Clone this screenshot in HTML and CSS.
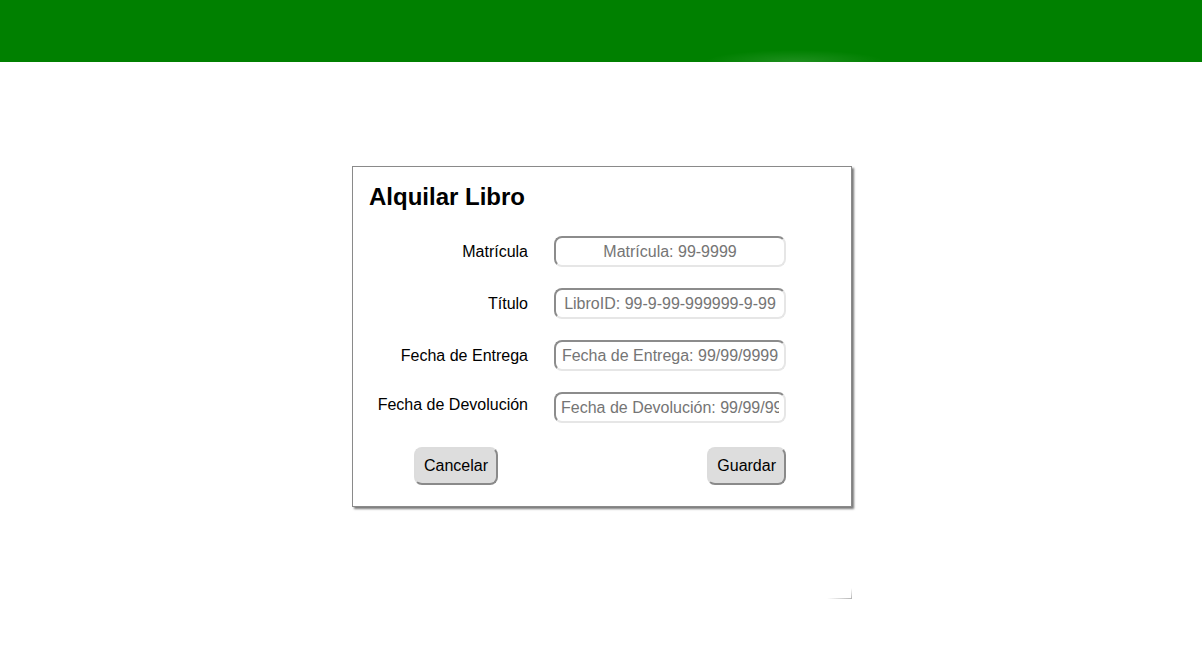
FILE: index.html
```html
<!DOCTYPE html>
<html lang="es">
<head>
<meta charset="utf-8">
<title>Alquilar Libro</title>
<link rel="stylesheet" href="styles.css">
</head>
<body>
<header class="topbar"></header>
<main class="stage">
  <form class="dialog">
    <h2 class="dialog-title">Alquilar Libro</h2>
    <div class="form-grid">
      <label class="field-label" for="mat">Matrícula</label>
      <input class="field-input" id="mat" type="text" placeholder="Matrícula: 99-9999">
      <label class="field-label" for="tit">Título</label>
      <input class="field-input" id="tit" type="text" placeholder="LibroID: 99-9-99-999999-9-99">
      <label class="field-label" for="ent">Fecha de Entrega</label>
      <input class="field-input" id="ent" type="text" placeholder="Fecha de Entrega: 99/99/9999">
      <label class="field-label field-label-high" for="dev">Fecha de Devolución</label>
      <input class="field-input" id="dev" type="text" placeholder="Fecha de Devolución: 99/99/9999">
    </div>
    <div class="actions">
      <button class="btn" type="button">Cancelar</button>
      <button class="btn" type="button">Guardar</button>
    </div>
  </form>
  <div class="corner-mark"></div>
</main>
</body>
</html>
```
FILE: styles.css
```css
html, body {
  margin: 0;
  padding: 0;
  background: #ffffff;
  font-family: "Liberation Sans", Arial, sans-serif;
  color: #000;
}

.topbar {
  height: 62px;
  background:
    radial-gradient(ellipse 90px 12px at 795px 62px, rgba(255, 255, 255, 0.12), rgba(255, 255, 255, 0) 100%),
    #008000;
}

.stage {
  position: relative;
  height: 610px;
  padding-top: 104px;
  box-sizing: border-box;
}

.dialog {
  box-sizing: border-box;
  width: 500px;
  margin-left: calc(50% - 249px);
  border: 1px solid #8a8a8a;
  box-shadow: 2px 2px 2px #7a7a7a;
  background: #fff;
  padding: 16px 16px 21px 16px;
}

.dialog-title {
  margin: 0 0 25px 0;
  font-size: 24px;
  font-weight: bold;
  line-height: 28px;
}

.form-grid {
  display: grid;
  grid-template-columns: 159px 232px;
  column-gap: 26px;
  row-gap: 21px;
  align-items: center;
}

.field-label {
  text-align: right;
  font-size: 16px;
  line-height: 18px;
}

.field-label-high {
  position: relative;
  top: -3px;
}

.field-input {
  box-sizing: border-box;
  width: 232px;
  height: 31px;
  margin: 0;
  padding: 0 5px;
  border: 2px solid;
  border-color: #8c8c8c #e6e6e6 #e6e6e6 #8c8c8c;
  border-radius: 8px;
  background: #fff;
  font-family: "Liberation Sans", Arial, sans-serif;
  font-size: 16px;
  text-align: center;
  outline: none;
}

.field-input::placeholder {
  color: #757575;
  opacity: 1;
}

.actions {
  display: flex;
  justify-content: space-between;
  width: 372px;
  margin: 24px 0 0 45px;
}

.btn {
  box-sizing: border-box;
  height: 38px;
  margin: 0;
  padding: 8px 8px;
  border: 2px solid;
  border-color: #dcdcdc #8a8a8a #8a8a8a #dcdcdc;
  border-radius: 8px;
  background: #dddddd;
  font-family: "Liberation Sans", Arial, sans-serif;
  font-size: 16px;
  line-height: 18px;
  color: #000;
}

.corner-mark {
  position: absolute;
  left: 827px;
  top: 526px;
  width: 25px;
  height: 11px;
  background:
    linear-gradient(to right, rgba(180, 180, 180, 0), #b4b4b4) left bottom / 100% 1px no-repeat,
    linear-gradient(to bottom, rgba(180, 180, 180, 0), #b4b4b4) right top / 1px 100% no-repeat;
}
```
